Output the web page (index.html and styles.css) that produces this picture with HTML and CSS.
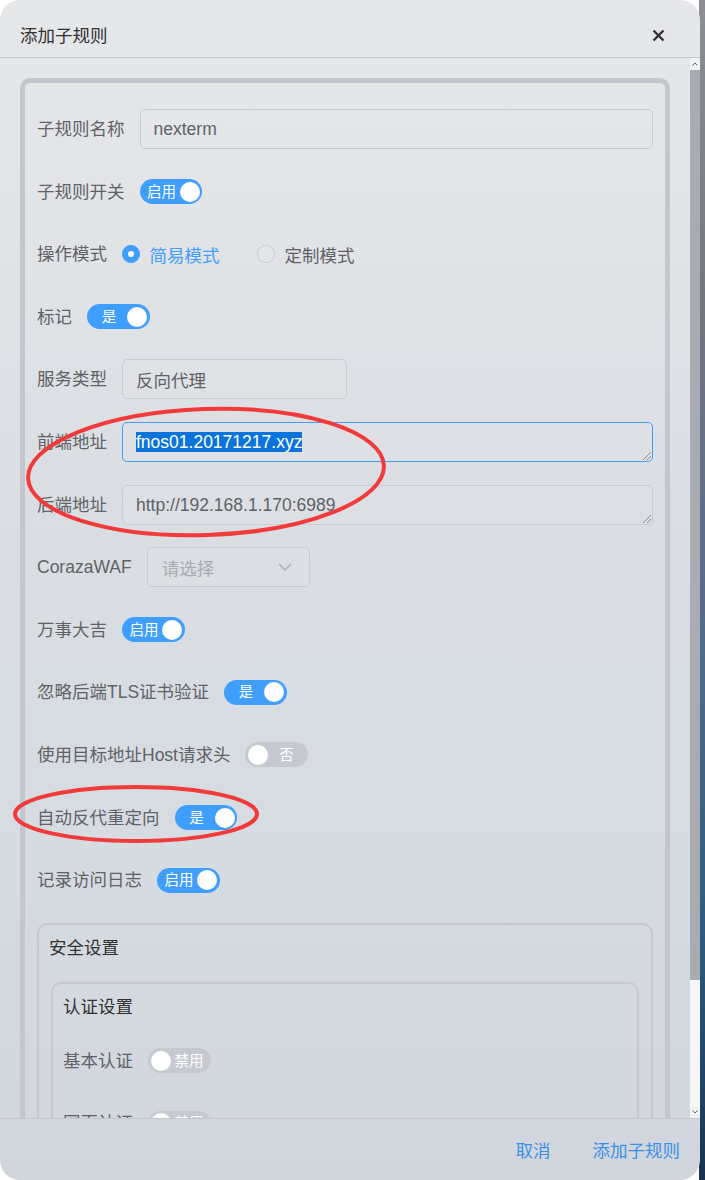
FILE: index.html
```html
<!DOCTYPE html>
<html lang="zh-CN">
<head>
<meta charset="utf-8">
<title>添加子规则</title>
<link rel="stylesheet" href="styles.css">
</head>
<body>
<div class="dialog">
  <div class="dlg-header">
    <span class="dlg-title">添加子规则</span>
    <button class="close" aria-label="关闭">
      <svg width="13" height="13" viewBox="0 0 13 13"><path d="M1.5 1.5 L11.5 11.5 M11.5 1.5 L1.5 11.5" stroke="#303133" stroke-width="2.4" fill="none"/></svg>
    </button>
  </div>
  <div class="dlg-main">
    <div class="dlg-body">
      <div class="panel">
        <div class="form-item"><span class="lbl">子规则名称</span><div class="input grow">nexterm</div></div>
        <div class="form-item"><span class="lbl">子规则开关</span><div class="sw on"><span class="sw-txt">启用</span><span class="knob"></span></div></div>
        <div class="form-item"><span class="lbl">操作模式</span>
          <div class="radio-group">
            <span class="radio on"><span class="radio-dot"></span>简易模式</span>
            <span class="radio"><span class="radio-dot"></span>定制模式</span>
          </div>
        </div>
        <div class="form-item"><span class="lbl">标记</span><div class="sw on"><span class="sw-txt">是</span><span class="knob"></span></div></div>
        <div class="form-item"><span class="lbl">服务类型</span><div class="input w-service">反向代理</div></div>
        <div class="form-item"><span class="lbl">前端地址</span><div class="textarea grow focused"><span class="sel">fnos01.20171217.xyz</span></div></div>
        <div class="form-item"><span class="lbl">后端地址</span><div class="textarea grow">http://192.168.1.170:6989</div></div>
        <div class="form-item"><span class="lbl">CorazaWAF</span>
          <div class="input select"><span class="placeholder">请选择</span>
            <svg width="14" height="8" viewBox="0 0 14 8"><path d="M1 1 L7 7 L13 1" stroke="#a8abb2" stroke-width="1.3" fill="none"/></svg>
          </div>
        </div>
        <div class="form-item"><span class="lbl">万事大吉</span><div class="sw on"><span class="sw-txt">启用</span><span class="knob"></span></div></div>
        <div class="form-item"><span class="lbl">忽略后端TLS证书验证</span><div class="sw on"><span class="sw-txt">是</span><span class="knob"></span></div></div>
        <div class="form-item"><span class="lbl">使用目标地址Host请求头</span><div class="sw off"><span class="knob"></span><span class="sw-txt">否</span></div></div>
        <div class="form-item"><span class="lbl">自动反代重定向</span><div class="sw on"><span class="sw-txt">是</span><span class="knob"></span></div></div>
        <div class="form-item"><span class="lbl">记录访问日志</span><div class="sw on"><span class="sw-txt">启用</span><span class="knob"></span></div></div>

        <div class="group">
          <div class="group-title">安全设置</div>
          <div class="group inner">
            <div class="group-title">认证设置</div>
            <div class="form-item"><span class="lbl">基本认证</span><div class="sw off"><span class="knob"></span><span class="sw-txt">禁用</span></div></div>
            <div class="form-item"><span class="lbl">网页认证</span><div class="sw off"><span class="knob"></span><span class="sw-txt">禁用</span></div></div>
          </div>
        </div>
      </div>
    </div>
    <div class="scrollbar">
      <div class="sb-btn"><svg width="6" height="4" viewBox="0 0 6 4"><path d="M0.5 3.5 L3 1 L5.5 3.5" stroke="#5f6368" stroke-width="1" fill="none"/></svg></div>
      <div class="sb-thumb"></div>
      <div class="sb-track"></div>
      <div class="sb-btn"><svg width="6" height="4" viewBox="0 0 6 4"><path d="M0.5 0.5 L3 3 L5.5 0.5" stroke="#5f6368" stroke-width="1" fill="none"/></svg></div>
    </div>
  </div>
  <div class="dlg-footer">
    <button class="btn-text">取消</button>
    <button class="btn-text">添加子规则</button>
  </div>
</div>
<svg class="marks" width="705" height="1180" viewBox="0 0 705 1180">
  <ellipse cx="206" cy="472" rx="178" ry="63" transform="rotate(-2 206 472)" fill="none" stroke="#f23a3a" stroke-width="4"/>
  <ellipse cx="136" cy="814" rx="121" ry="27" fill="none" stroke="#f23a3a" stroke-width="4"/>
</svg>
</body>
</html>
```

FILE: styles.css
```css
* { box-sizing: border-box; }

html, body { margin: 0; padding: 0; }

body {
  position: relative;
  width: 705px;
  height: 1180px;
  overflow: hidden;
  font-family: "Liberation Sans", "Noto Sans CJK SC", sans-serif;
  background:
    linear-gradient(to right, #ffffff 0 699px, transparent 699px),
    linear-gradient(to bottom, #8c8e94 0%, #74777f 25%, #53698a 55%, #2d5a7b 80%, #1b3350 100%);
}

.dialog {
  width: 700px;
  height: 1180px;
  border-radius: 20px;
  overflow: hidden;
  display: flex;
  flex-direction: column;
  background: linear-gradient(to bottom, #e6e7e9 0%, #e2e4e7 18%, #dadee3 42%, #d6dce2 70%, #d1d6dd 100%);
}

/* header */
.dlg-header {
  flex: none;
  height: 58px;
  border-bottom: 1px solid #c6c9ce;
  display: flex;
  align-items: center;
  justify-content: space-between;
  padding: 14px 35px 0 20px;
}
.dlg-title {
  font-size: 17.5px;
  line-height: 24px;
  color: #303133;
}
.close {
  border: 0;
  background: none;
  padding: 0;
  width: 13px;
  height: 13px;
  display: flex;
}

/* main */
.dlg-main {
  flex: 1;
  min-height: 0;
  display: flex;
}
.dlg-body {
  flex: 1;
  overflow: hidden;
  padding: 20px 20px 0 20px;
}
.scrollbar {
  flex: none;
  width: 10px;
  display: flex;
  flex-direction: column;
  background: #f4f6f9;
}
.sb-btn {
  height: 12px;
  display: flex;
  align-items: center;
  justify-content: center;
  background: #f1f2f5;
}
.sb-thumb {
  height: 910px;
  background: #a8abb2;
}
.sb-track { flex: 1; }

.panel {
  border: 5px solid #c3c6cd;
  border-radius: 10px;
  padding: 26px 12px 0 12px;
}

.form-item {
  display: flex;
  align-items: center;
  height: 40px;
  margin-bottom: 22.6px;
}
.lbl {
  font-size: 17.5px;
  line-height: 24px;
  color: #606266;
  padding-right: 15px;
  white-space: nowrap;
}

.input {
  height: 40px;
  border: 1px solid #c8cbd1;
  border-radius: 5px;
  padding: 0 13px;
  display: flex;
  align-items: center;
  font-size: 17.5px;
  color: #606266;
  background: rgba(255, 255, 255, 0.06);
}
.grow { flex: 1; }
.w-service { width: 225px; }

.textarea {
  position: relative;
  height: 40px;
  border: 1px solid #c8cbd1;
  border-radius: 5px;
  padding: 6px 13px;
  font-size: 17.5px;
  line-height: 26px;
  color: #606266;
  background: rgba(255, 255, 255, 0.06);
}
.textarea::after {
  content: "";
  position: absolute;
  right: 1px;
  bottom: 1px;
  width: 8px;
  height: 8px;
  background: linear-gradient(135deg, transparent 0 48%, #8a8d93 48% 56%, transparent 56% 72%, #8a8d93 72% 80%, transparent 80%);
}
.textarea.focused { border-color: #409eff; }
.sel {
  background: #0a74da;
  color: #ffffff;
  line-height: 20px;
  display: inline-block;
}

.select {
  width: 163px;
  justify-content: space-between;
  padding: 0 17px 0 14px;
}
.placeholder { color: #a8abb2; }

/* radio */
.radio-group {
  display: flex;
  align-items: center;
}
.radio {
  display: flex;
  align-items: center;
  margin-right: 37.5px;
  font-size: 17.5px;
  color: #606266;
  white-space: nowrap;
}
.radio-dot {
  width: 17.5px;
  height: 17.5px;
  border-radius: 50%;
  border: 1px solid #c8cbd1;
  margin-right: 10px;
  background: rgba(255, 255, 255, 0.12);
  display: flex;
  align-items: center;
  justify-content: center;
}
.radio.on { color: #409eff; }
.radio.on .radio-dot {
  background: #409eff;
  border-color: #409eff;
}
.radio.on .radio-dot::after {
  content: "";
  width: 6px;
  height: 6px;
  border-radius: 50%;
  background: #ffffff;
}

/* switch */
.sw {
  width: 62.5px;
  height: 25px;
  border-radius: 12.5px;
  padding: 2.5px;
  display: flex;
  align-items: center;
  gap: 2px;
  flex: none;
}
.sw.on { background: #409eff; padding-left: 6px; }
.sw.off { background: #c6c9cf; padding-right: 5px; }
.sw-txt {
  flex: 1;
  text-align: center;
  font-size: 14.5px;
  line-height: 20px;
  color: #ffffff;
  white-space: nowrap;
}
.knob {
  width: 20px;
  height: 20px;
  border-radius: 50%;
  background: #ffffff;
  flex: none;
}

/* nested groups */
.group {
  border: 2px solid #c5c8cf;
  border-radius: 10px;
  padding: 10px 12px 0 10px;
  margin-bottom: 22px;
}
.group.inner { margin-left: 2px; }
.group-title {
  font-size: 17.5px;
  line-height: 26px;
  color: #303133;
  margin: 0 0 21px 0;
}

/* footer */
.dlg-footer {
  flex: none;
  height: 62px;
  border-top: 1px solid #c3c6cc;
  display: flex;
  justify-content: flex-end;
  align-items: center;
  gap: 42px;
  padding: 3px 20px 0 0;
}
.btn-text {
  border: 0;
  background: none;
  padding: 0;
  font-family: inherit;
  font-size: 17.5px;
  line-height: 24px;
  color: #3b8fe5;
}

/* annotation marks */
.marks {
  position: absolute;
  left: 0;
  top: 0;
  pointer-events: none;
}
```
